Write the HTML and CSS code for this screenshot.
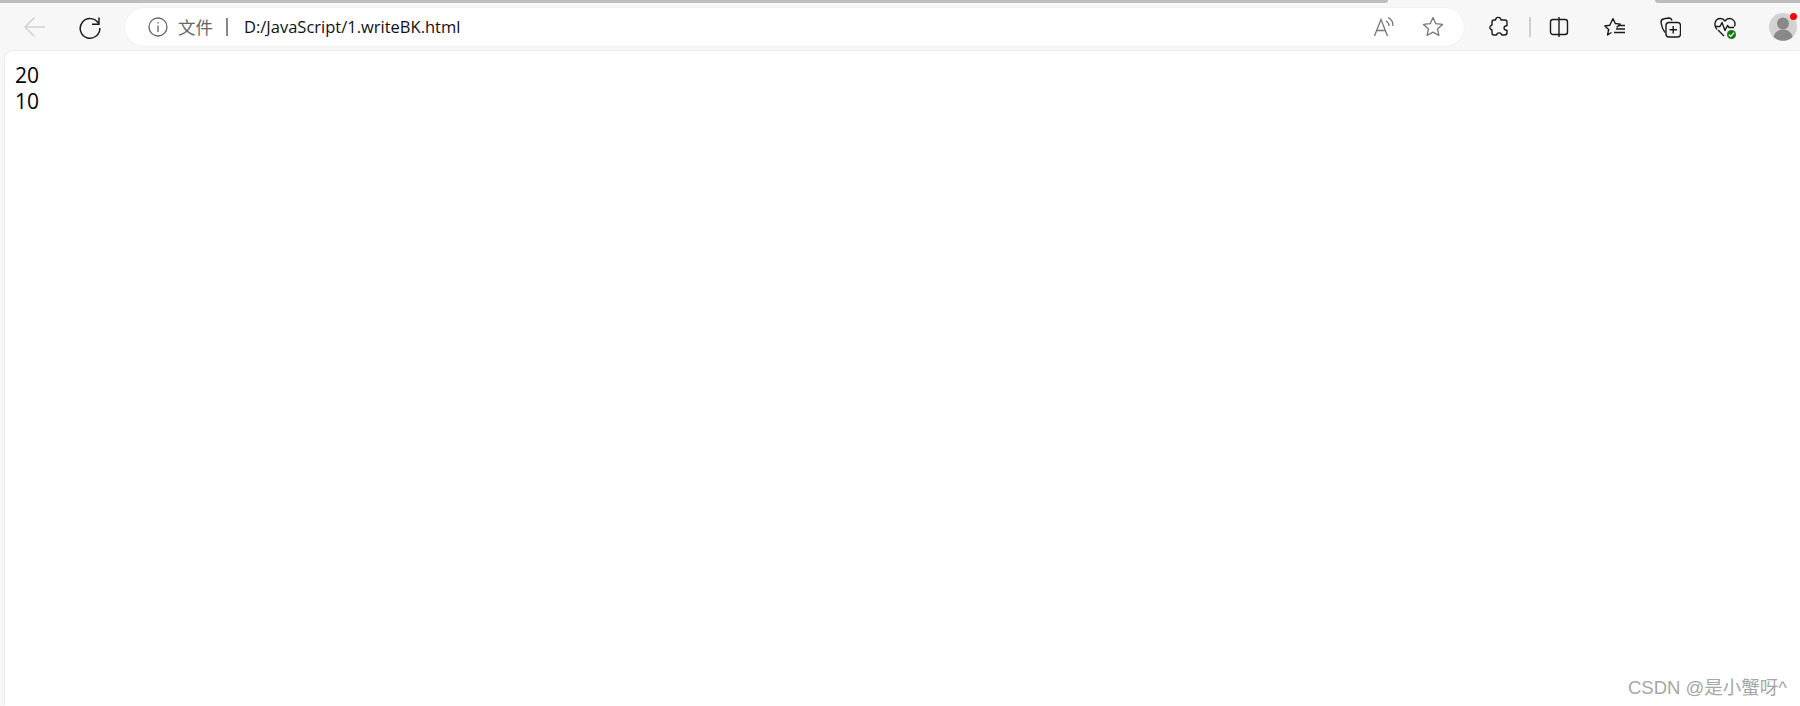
FILE: index.html
```html
<!DOCTYPE html>
<html lang="zh-CN">
<head>
  <meta charset="UTF-8" />
  <title>1.writeBK.html</title>
  <link rel="stylesheet" href="styles.css">
</head>
<body>
  <!-- tab strip -->
  <div class="tab-strip">
    <div class="tab-edge tab-edge-left"></div>
    <div class="tab-edge tab-edge-right"></div>
  </div>

  <!-- toolbar -->
  <div class="toolbar">
    <div class="nav-btn nav-back">
      <svg width="26" height="26" viewBox="0 0 26 26" fill="none" stroke="#d2d2d2" stroke-width="1.5">
        <path d="M3 13H23M12.500 3.500L3 13l9.500 9.500"/>
      </svg>
    </div>
    <div class="nav-btn nav-reload">
      <svg width="24" height="24" viewBox="0 0 24 24" fill="none" stroke="#1a1a1a" stroke-width="1.5">
        <path d="M20.500 8.500A9.800 9.800 0 1 0 21.800 13"/>
        <path d="M14 9.300h7V2.500"/>
      </svg>
    </div>

    <div class="address-bar">
      <svg class="info-icon" width="20" height="20" viewBox="0 0 20 20" fill="none" stroke="#666" stroke-width="1.3">
        <circle cx="10" cy="10" r="9"/>
        <path d="M10 8.600V15M10 5v1.600"/>
      </svg>
      <span class="scheme">文件</span>
      <span class="scheme-sep"></span>
      <span class="url">D:/JavaScript/1.writeBK.html</span>
      <div class="address-actions">
        <svg width="22" height="22" viewBox="0 0 22 22" fill="none" stroke="#777" stroke-width="1.3">
          <path d="M1.500 20L8 3.500 14.500 20M4 14.500h8"/>
          <path d="M13 5a5.500 5.500 0 0 1 3 5M15 1.500a9 9 0 0 1 5 8.500"/>
        </svg>
        <svg width="22" height="22" viewBox="0 0 22 22" fill="none" stroke="#777" stroke-width="1.3" stroke-linejoin="round">
          <path d="M11 1.500l2.800 6.200 6.700.7-5 4.500 1.400 6.600-5.900-3.400-5.900 3.400 1.400-6.600-5-4.500 6.700-.7z"/>
        </svg>
      </div>
    </div>

    <div class="toolbar-icons">
      <svg class="icon-ext" width="20" height="22" viewBox="0 0 20 22" fill="none" stroke="#1a1a1a" stroke-width="1.4" stroke-linejoin="round">
        <path d="M7 2.500c1-1.500 3.500-1.500 4.500 0l.5 1.500h4c1.500 0 2 1 2 2v3.500l-1.500.5c-2 .7-2 3.300 0 4l1.500.5v2c0 1.500-1 2.500-2.500 2.500h-2.500l-.7-1c-1-1.500-3.300-1.500-4.300 0l-.7 1H5c-1 0-2-1-2-2v-3l-1-.5c-1.500-1-1.500-3 0-4l1-.5V6c0-1 1-2 2-2h1.500z"/>
      </svg>
      <span class="toolbar-sep"></span>
      <svg class="icon-split" width="20" height="22" viewBox="0 0 20 22" fill="none" stroke="#1a1a1a" stroke-width="1.4">
        <rect x="1.500" y="3.500" width="17" height="15" rx="2.500"/>
        <path d="M10 1v20"/>
      </svg>
      <svg class="icon-favs" width="22" height="20" viewBox="0 0 22 20" fill="none" stroke="#1a1a1a" stroke-width="1.4" stroke-linejoin="round">
        <path d="M9 1.500l2.300 5 5 .6-3.700 3.300M7.500 15.500L3.500 18l1.200-5.500L.8 9l5-.8L9 1.500"/>
        <path d="M14 8.500h7M12 12h9M10 15.500h11"/>
      </svg>
      <svg class="icon-coll" width="21" height="21" viewBox="0 0 21 21" fill="none" stroke="#1a1a1a" stroke-width="1.4">
        <path d="M5 15.500C3 13 1.500 9 1 5.500 1 3.500 2.500 2 4 1.800l5-.8c1.500 0 2.500 1 3 2.500"/>
        <rect x="6" y="5.500" width="14.500" height="14.500" rx="3"/>
        <path d="M13.200 9v7.500M9.500 12.700H17"/>
      </svg>
      <div class="icon-health">
        <svg width="22" height="20" viewBox="0 0 22 20" fill="none" stroke="#1a1a1a" stroke-width="1.4" stroke-linejoin="round">
          <path d="M3 12.500C1 10.500.8 8 1 6.500 1.500 3 4 1.500 6.500 1.500c2 0 3.500 1 4.500 2.500 1-1.500 2.500-2.500 4.500-2.500 3 0 5.500 2.500 5.500 5.500 0 1-.2 2-.7 2.500"/>
          <path d="M1 9.500h5l2-4 3 8 2.500-5 1.500 2h5M4 13l6 6"/>
        </svg>
        <span class="health-badge">
          <svg width="7" height="7" viewBox="0 0 8 8" fill="none" stroke="#fff" stroke-width="1.400">
            <path d="M1 4.200l2 2 4-4.200"/>
          </svg>
        </span>
      </div>
      <div class="avatar">
        <svg width="28" height="28" viewBox="0 0 28 28">
          <circle cx="14" cy="14" r="14" fill="#d3d2d0"/>
          <circle cx="14" cy="10.500" r="6" fill="#8a8886"/>
          <path d="M4.500 24c1-5 5-7.500 9.500-7.500s8.500 2.500 9.500 7.500a14 14 0 0 1-19 0z" fill="#8a8886"/>
        </svg>
        <span class="avatar-dot"></span>
      </div>
    </div>
  </div>

  <!-- page content -->
  <div class="page">
    <div class="output">20<br>10</div>
    <div class="watermark">CSDN @是小蟹呀^</div>
  </div>
</body>
</html>
```

FILE: styles.css
```css
html, body {
  height: 100%;
}
body {
  margin: 0;
  background-color: #f7f7f7;
  font-family: "Open Sans", "Noto Sans CJK SC", sans-serif;
  display: flex;
  flex-direction: column;
  overflow: hidden;
}
/* Tab strip */
.tab-strip {
  height: 3px;
  display: flex;
  justify-content: space-between;
  flex-shrink: 0;
}
.tab-edge {
  background-color: #bdbdbd;
  height: 3px;
}
.tab-edge-left {
  width: 1388px;
  border-bottom-right-radius: 4px;
}
.tab-edge-right {
  width: 145px;
  border-bottom-left-radius: 4px;
}
/* Toolbar */
.toolbar {
  height: 48px;
  display: flex;
  align-items: center;
  flex-shrink: 0;
}
.nav-btn {
  display: flex;
  align-items: center;
  justify-content: center;
}
.nav-back {
  width: 26px;
  margin-left: 22px;
}
.nav-reload {
  width: 24px;
  margin-left: 30px;
}
.address-bar {
  width: 1339px;
  height: 38px;
  margin-left: 23px;
  box-sizing: border-box;
  padding-left: 23px;
  background-color: #fff;
  border-radius: 19px;
  box-shadow: 0 0 2px rgba(0, 0, 0, 0.08);
  display: flex;
  align-items: center;
}
.scheme {
  margin-left: 10px;
  padding-bottom: 2px;
  font-size: 17.5px;
  color: #666;
}
.scheme-sep {
  width: 2px;
  height: 18px;
  margin-left: 13px;
  background-color: #888;
}
.url {
  margin-left: 16px;
  padding-bottom: 2px;
  font-size: 16.5px;
  color: #111;
}
.address-actions {
  margin-left: auto;
  margin-right: 20px;
  display: flex;
  align-items: center;
  gap: 27px;
}
.toolbar-icons {
  display: flex;
  align-items: center;
  margin-left: 25px;
}
.toolbar-sep {
  width: 2px;
  height: 20px;
  margin-left: 20px;
  background-color: #d0d0d0;
}
.icon-split {
  margin-left: 18px;
}
.icon-favs {
  margin-left: 35px;
}
.icon-coll {
  margin-left: 34px;
}
.icon-health {
  position: relative;
  display: flex;
  margin-left: 33px;
}
.health-badge {
  position: absolute;
  right: 0;
  bottom: -2px;
  width: 9px;
  height: 9px;
  border-radius: 50%;
  background-color: #107c10;
  display: flex;
  align-items: center;
  justify-content: center;
}
.avatar {
  position: relative;
  display: flex;
  margin-left: 33px;
}
.avatar-dot {
  position: absolute;
  top: 0;
  right: 0;
  width: 7px;
  height: 7px;
  border-radius: 50%;
  background-color: #f00;
}
/* Page */
.page {
  position: relative;
  flex: 1;
  margin-left: 5px;
  background-color: #fff;
  border-top-left-radius: 8px;
  box-shadow: 0 0 2px rgba(0, 0, 0, 0.15);
  padding: 11px 10px 10px;
}
.output {
  font-size: 21px;
  line-height: 26px;
  color: #000;
}
.watermark {
  position: absolute;
  right: 13px;
  bottom: 7px;
  font-family: "Liberation Sans", "Noto Sans CJK SC", sans-serif;
  font-size: 18.5px;
  color: #a6a6a6;
}
```
